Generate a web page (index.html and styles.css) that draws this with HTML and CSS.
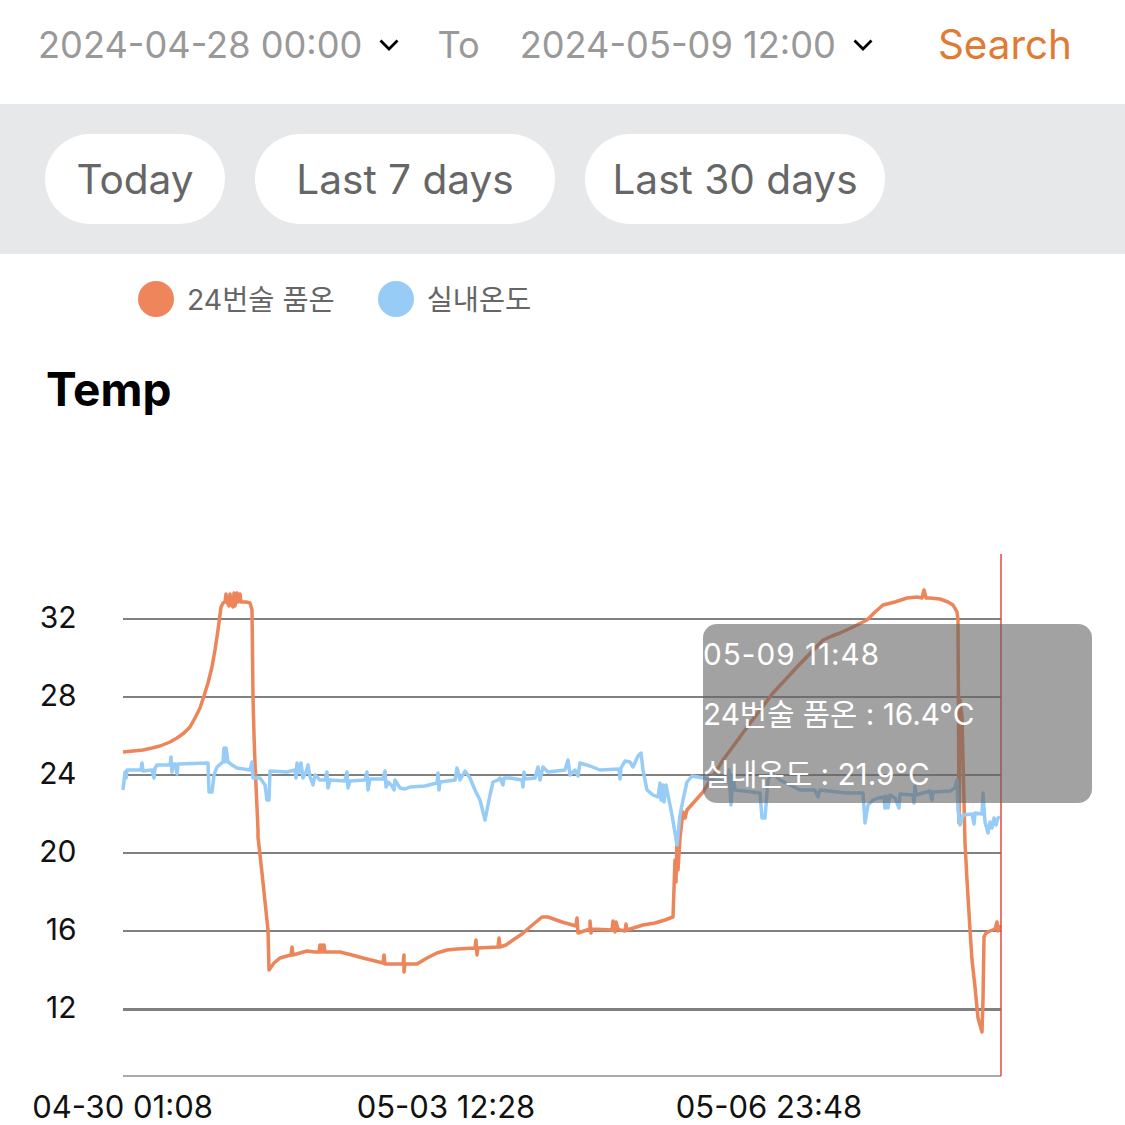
FILE: index.html
```html
<!DOCTYPE html>
<html lang="en">
<head>
    <meta charset="UTF-8">
    <meta name="viewport" content="width=device-width, initial-scale=1.0">
    <title>Temp</title>
    <link rel="stylesheet" href="styles.css">
</head>
<body>
    <!-- Date range -->
    <div class="range-bar">
        <span class="date date-from">2024-04-28 00:00</span>
        <svg class="chevron" viewBox="0 0 20 12"><path d="M1.5 1.5 L10 10 L18.500 1.500"/></svg>
        <span class="date date-to">To</span>
        <span class="date date-end">2024-05-09 12:00</span>
        <svg class="chevron" viewBox="0 0 20 12"><path d="M1.5 1.5 L10 10 L18.500 1.500"/></svg>
        <span class="search">Search</span>
    </div>

    <!-- Quick ranges -->
    <div class="quick-bar">
        <div class="pill pill-short">Today</div>
        <div class="pill">Last 7 days</div>
        <div class="pill">Last 30 days</div>
    </div>

    <!-- Legend -->
    <div class="legend">
        <span class="dot dot-orange"></span>
        <span class="legend-label">24번술 품온</span>
        <span class="dot dot-blue"></span>
        <span class="legend-label">실내온도</span>
    </div>

    <h1 class="title">Temp</h1>

    <!-- Chart -->
    <div class="chart">
        <svg class="chart-svg" viewBox="0 540 1125 585" width="1125" height="585">
            <g class="grid">
                <line x1="123" x2="1001" y1="619" y2="619"/>
                <line x1="123" x2="1001" y1="697" y2="697"/>
                <line x1="123" x2="1001" y1="775" y2="775"/>
                <line x1="123" x2="1001" y1="853" y2="853"/>
                <line x1="123" x2="1001" y1="931" y2="931"/>
                <line x1="123" x2="1001" y1="1009.500" y2="1009.500" class="grid-low"/>
            </g>
            <line class="axis" x1="123" x2="1001" y1="1076" y2="1076"/>
            <g class="y-labels">
                <text x="76.500" y="627.500">32</text>
                <text x="76.500" y="705.500">28</text>
                <text x="76.500" y="783.500">24</text>
                <text x="76.500" y="861.500">20</text>
                <text x="76.500" y="939.500">16</text>
                <text x="76.500" y="1017.500">12</text>
            </g>
            <g class="x-labels">
                <text x="122.500" y="1118">04-30 01:08</text>
                <text x="446" y="1118">05-03 12:28</text>
                <text x="769" y="1118">05-06 23:48</text>
            </g>
            <polyline class="series series-orange" points="123,752 133,751 143,750 152,748 160,746 170,742 177,738 184,733 190,727 195,718 200,708 204,696 208,683 212,667 215,650 218,630 221,607 223,603 225,602 226,594 227,602 229,606 230,594 231,603 233,607 234,593 235,606 237,593 238,602 240,594 241,602 246,602 250,603 252,610 253,697 254,735 255,763 258,830 258,837 262,873 268,930 269,970 274,963 280,958 287,956 291,955 292,947 293,955 300,953 307,951 315,952 319,952 320,945 321,952 322,945 323,952 324,945 325,952 330,952 340,952 352,955 363,958 375,961 383,963 384,955 385,964 400,964 403,964 404,955 404,972 405,964 417,964 427,958 437,953 447,950 457,949 475,948 476,940 477,955 478,948 498,947 499,938 500,947 506,945 513,940 522,934 530,927 542,917 548,917 562,922 576,926 577,918 578,933 590,929 590,921 591,933 592,929 612,930 613,921 615,932 616,922 618,929 620,930 625,931 626,924 627,930 643,925 655,923 665,920 673,917 675,860 676,882 677,840 678,870 680,838 683,812 685,818 687,810 703,792 723,760 748,726 773,693 798,666 823,640 832,636 840,633 853,627 867,620 875,612 883,605 895,602 907,598 917,597 922,598 924,590 926,598 930,598 940,599 948,602 953,605 957,612 958,620 959,823 960,700 962,717 965,843 967,880 970,930 972,960 975,987 978,1018 982,1032 983,1000 984,937 986,933 990,931 995,929 997,922 998,931 1000,925"/>
            <polyline class="series series-blue" points="123,790 125,772 126,778 127,770 141,770 142,763 143,771 152,770 154,778 155,768 157,765 170,765 171,757 172,772 173,764 175,764 177,774 178,764 208,763 209,792 212,792 214,775 217,767 223,762 224,748 225,762 226,748 228,762 232,765 237,768 250,770 252,762 253,778 260,778 265,785 267,800 269,800 270,771 287,772 295,770 296,778 297,763 299,772 301,763 303,778 306,772 308,765 310,777 313,785 315,775 320,780 325,780 327,772 328,788 330,780 345,781 347,772 348,788 350,781 365,780 367,772 368,790 370,779 377,779 383,779 385,771 386,787 388,782 392,786 394,790 395,780 400,788 405,789 410,787 425,786 437,783 438,773 439,790 440,782 455,780 457,768 460,780 465,771 470,778 475,790 480,800 485,820 490,795 493,782 498,780 500,778 503,785 504,778 510,778 522,780 523,787 524,772 525,779 535,778 538,767 540,780 543,767 548,772 565,770 568,760 570,775 575,770 578,776 580,763 590,766 600,770 619,769 620,779 621,768 625,761 630,762 633,767 638,756 641,753 643,770 647,790 653,795 658,797 660,783 661,800 663,785 664,802 666,785 668,795 672,815 677,845 680,815 683,800 687,782 692,776 703,778 727,782 729,770 731,805 733,775 735,790 760,793 762,818 765,818 768,780 772,773 780,780 790,785 800,790 815,790 818,797 820,790 847,793 863,793 865,823 868,805 873,800 878,798 884,797 885,808 886,796 888,808 890,795 895,798 899,808 900,794 913,795 914,803 915,786 916,795 930,791 932,800 933,792 950,791 955,788 957,780 958,810 960,825 963,815 972,814 974,824 975,813 982,814 983,793 985,822 988,833 990,822 992,828 994,818 996,825 998,818 1000,817"/>
            <line class="cursor" x1="1001" x2="1001" y1="554" y2="1076"/>
        </svg>
        <div class="tooltip">
            <div class="tooltip-time">05-09 11:48</div>
            <div>24번술 품온 : 16.4°C</div>
            <div>실내온도 : 21.9°C</div>
        </div>
    </div>
</body>
</html>
```

FILE: styles.css
```css
/* Basic Reset */
* {
    margin: 0;
    padding: 0;
    box-sizing: border-box;
    font-family: Inter, 'Noto Sans CJK KR', sans-serif;
}

body {
    width: 1125px;
    height: 1125px;
    overflow: hidden;
    background-color: #ffffff;
}

/* Date range */
.range-bar {
    display: flex;
    align-items: center;
    height: 104px;
    padding: 0 0 15px 38px;
    white-space: nowrap;
}
.date {
    font-size: 36.2px;
    color: #999999;
}
.date-to {
    margin-left: 38px;
}
.date-end {
    margin-left: 40px;
}
.chevron {
    width: 20px;
    height: 12px;
    margin-left: 17px;
    fill: none;
    stroke: #000000;
    stroke-width: 2.8;
}
.search {
    margin-left: 65px;
    font-size: 40.4px;
    color: #e07b33;
}

/* Quick ranges */
.quick-bar {
    display: flex;
    gap: 30px;
    height: 150px;
    padding: 30px 45px;
    background-color: #e7e8ea;
}
.pill {
    display: flex;
    align-items: center;
    justify-content: center;
    width: 300px;
    height: 90px;
    border-radius: 45px;
    background-color: #ffffff;
    font-size: 40.6px;
    color: #666666;
}
.pill-short {
    width: 180px;
}

/* Legend */
.legend {
    display: flex;
    align-items: center;
    height: 90px;
    padding: 0 0 0 138px;
}
.dot {
    width: 36px;
    height: 36px;
    border-radius: 50%;
}
.dot-orange {
    background-color: #ef865b;
}
.dot-blue {
    margin-left: 43px;
    background-color: #97ccf7;
}
.legend-label {
    margin-left: 13px;
    padding-bottom: 3px;
    font-size: 28.4px;
    color: #666666;
}

.title {
    height: 196px;
    padding: 17px 0 0 46px;
    font-size: 46px;
    font-weight: 700;
    color: #000000;
}

/* Chart */
.chart {
    position: relative;
    width: 1125px;
    height: 585px;
}
.chart-svg {
    display: block;
}
.grid line {
    stroke: #808080;
    stroke-width: 2;
}
.grid .grid-low {
    stroke-width: 3;
}
.axis {
    stroke: #aaaaaa;
    stroke-width: 2;
}
.y-labels text,
.x-labels text {
    fill: #111111;
}
.y-labels text {
    font-size: 30px;
    text-anchor: end;
}
.x-labels text {
    font-size: 31px;
    text-anchor: middle;
}
.series {
    fill: none;
    stroke-width: 3.5;
    stroke-linejoin: round;
}
.series-orange {
    stroke: #ec8559;
}
.series-blue {
    stroke: #97ccf7;
}
.cursor {
    stroke: #e2493f;
    stroke-width: 1.5;
}

.tooltip {
    position: absolute;
    left: 703px;
    top: 84px;
    width: 389px;
    height: 179px;
    border-radius: 14px;
    background-color: rgba(100, 100, 100, 0.6);
    font-size: 29.7px;
    line-height: 60px;
    color: #ffffff;
}
.tooltip-time {
    letter-spacing: 1px;
}
```
